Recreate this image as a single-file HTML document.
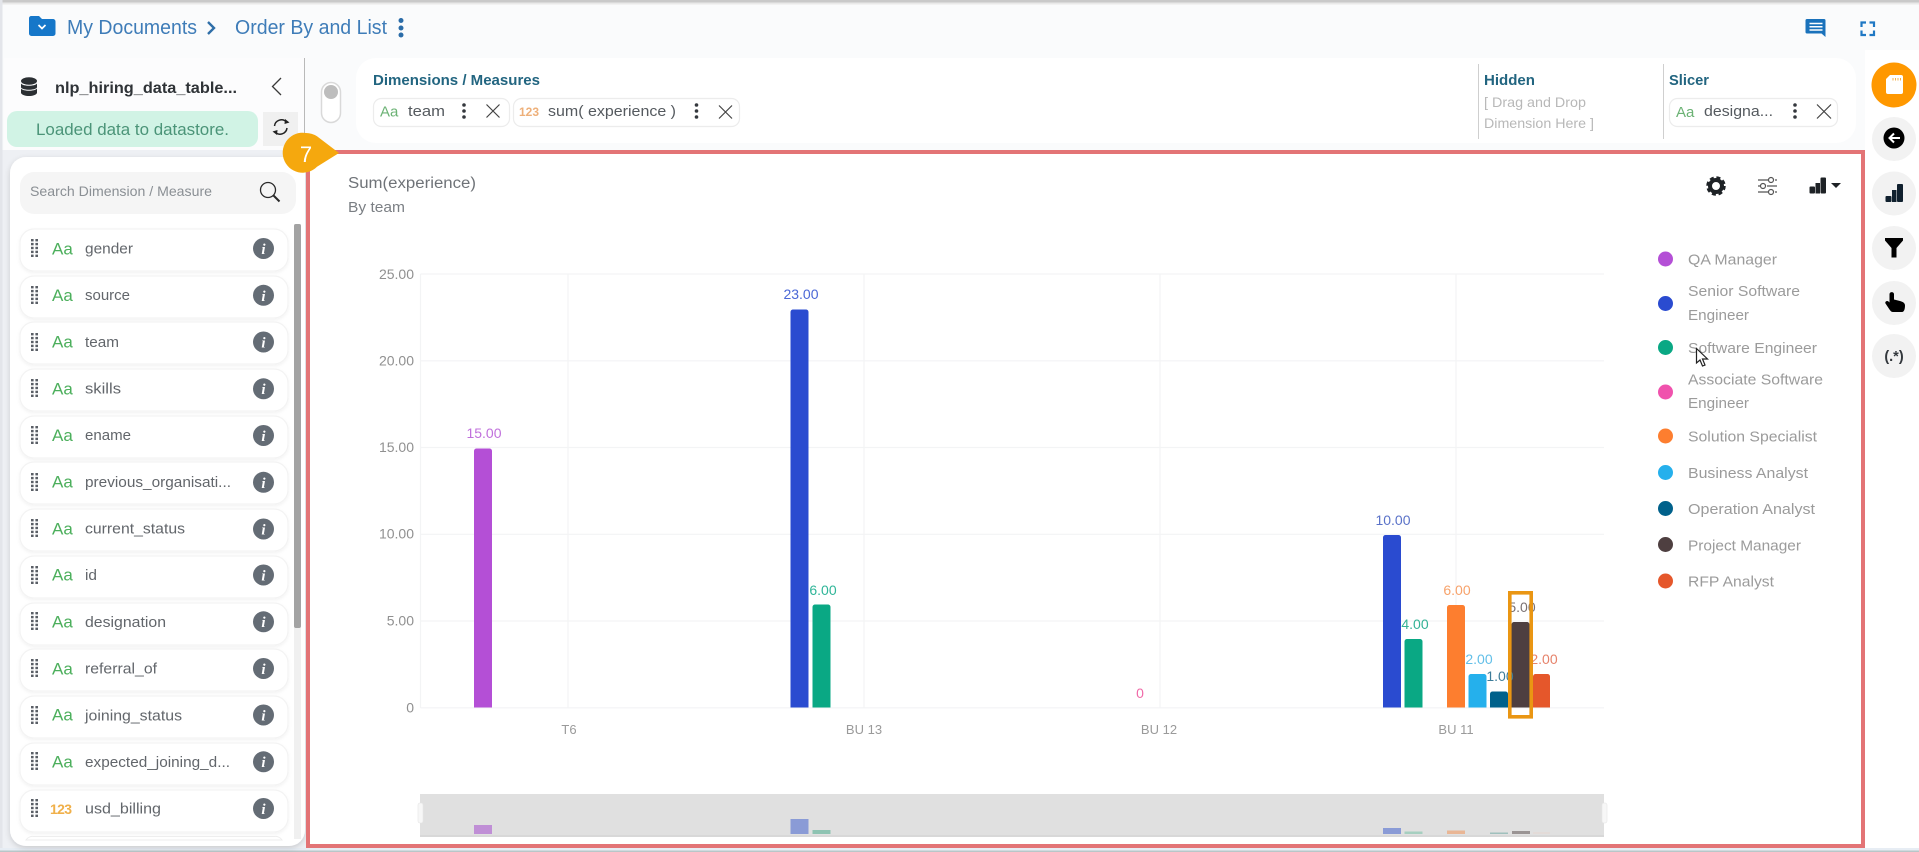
<!DOCTYPE html>
<html lang="en"><head><meta charset="utf-8"><title>Order By and List</title>
<style>
html,body{margin:0;padding:0;width:1919px;height:852px;overflow:hidden;background:#fafbfc}
svg{display:block;font-family:"Liberation Sans",sans-serif;filter:blur(.3px)}
.aa{font-size:17px;fill:#4caf5c}
.n{font-size:15px;fill:#62666b}
.i{font-size:15px;font-weight:bold;font-style:italic;fill:#fff;text-anchor:middle;font-family:"Liberation Serif",serif}
.y{font-size:14px;fill:#909090;text-anchor:end}
.x{font-size:13px;fill:#9a9a9a;text-anchor:middle}
.v{font-size:14px;text-anchor:middle}
.l{font-size:15px;fill:#9b9b9b}
.h{font-size:14.5px;font-weight:bold;fill:#226580}
.g{stroke:#f3f4f5;stroke-width:1.2}
.item{fill:#fff;stroke:#f3f3f3;stroke-width:1.2}
</style></head><body>
<svg width="1919" height="852" viewBox="0 0 1919 852" xmlns="http://www.w3.org/2000/svg">
<defs>
<g id="grip" fill="#5a5f66">
<rect x="0" y="0" width="7" height="2.4"/><rect x="0" y="3.9" width="7" height="2.4"/><rect x="0" y="7.8" width="7" height="2.4"/><rect x="0" y="11.7" width="7" height="2.4"/><rect x="0" y="15.6" width="7" height="2.4"/>
<rect x="2.6" y="0" width="1.8" height="18" fill="#fff"/>
</g>
<filter id="sh" x="-5%" y="-5%" width="110%" height="110%"><feDropShadow dx="0" dy="2" stdDeviation="3" flood-color="#000" flood-opacity=".16"/></filter>
<filter id="s2" x="-5%" y="-10%" width="110%" height="125%"><feDropShadow dx="0" dy="1.5" stdDeviation="1.5" flood-color="#000" flood-opacity=".05"/></filter>
</defs>

<!-- page background -->
<rect width="1919" height="852" fill="#fafbfc"/>
<rect x="0" y="0" width="1919" height="2.5" fill="#c9c9c9"/>
<rect x="0" y="2.5" width="1919" height="2" fill="#e9e9e9"/>
<rect x="0" y="0" width="2.5" height="852" fill="#e3e5ea"/>
<rect x="2.5" y="150" width="304" height="700" fill="#eef0f4"/>
<rect x="4" y="58" width="300" height="92" fill="#fcfcfd"/>
<rect x="1865" y="50" width="54" height="802" fill="#fff"/>
<rect x="0" y="848" width="1919" height="4" fill="#e7edf4"/>
<rect x="0" y="850.5" width="1919" height="1.5" fill="#b9c6c8"/>

<!-- header -->
<path d="M31 16h8l3 3h11a2.500 2.500 0 0 1 2.500 2.500v12a2.500 2.500 0 0 1-2.500 2.500H31.500a2.500 2.500 0 0 1-2.500-2.500V18.500A2.500 2.500 0 0 1 31 16z" fill="#1677c9"/>
<path d="M38.500 25l3.500 3.500 3.500-3.500" fill="none" stroke="#fff" stroke-width="1.700"/>
<text x="67" y="34" font-size="20" fill="#3e7cb8" textLength="130" lengthAdjust="spacingAndGlyphs">My Documents</text>
<path d="M208 22l6 6-6 6" fill="none" stroke="#2f6ea8" stroke-width="2.400"/>
<text x="235" y="34" font-size="20" fill="#3e7cb8" textLength="152" lengthAdjust="spacingAndGlyphs">Order By and List</text>
<g fill="#2b6ca8"><circle cx="401" cy="20.500" r="2.500"/><circle cx="401" cy="28" r="2.500"/><circle cx="401" cy="35" r="2.500"/></g>
<path d="M1807 19h17a1.500 1.500 0 0 1 1.500 1.500V37l-4-3.500h-14.500a1.500 1.500 0 0 1-1.500-1.500V20.500a1.500 1.500 0 0 1 1.500-1.500z" fill="#1a72bb"/>
<path d="M1809.500 23.500h13M1809.500 26.800h13M1809.500 30h13" stroke="#fff" stroke-width="1.500"/>
<path d="M1861.500 27v-4.500h4.500M1869.500 22.500h4.500V27M1874 30.500v4.500h-4.500M1866 35h-4.500v-4.500" fill="none" stroke="#1f78c4" stroke-width="2.200"/>

<!-- data source header -->
<g fill="#2b2f33"><ellipse cx="29" cy="81" rx="8" ry="3.800"/><path d="M21 83.500c2 3 14 3 16 0v4c-2 3-14 3-16 0zM21 88.500c2 3 14 3 16 0v4.500c-2 4-14 4-16 0z"/></g>
<text x="55" y="93" font-size="16" font-weight="bold" fill="#2f3337" textLength="182" lengthAdjust="spacingAndGlyphs">nlp_hiring_data_table...</text>
<path d="M281 78l-8.500 8.500 8.500 8.500" fill="none" stroke="#3a3a3a" stroke-width="1.300"/>
<rect x="7" y="111" width="251" height="36" rx="10" fill="#d1f3e5"/>
<text x="36" y="135" font-size="16.500" fill="#4b9478" textLength="193" lengthAdjust="spacingAndGlyphs">Loaded data to datastore.</text>
<rect x="263" y="112" width="35" height="34" fill="#f0f0f0"/>
<path d="M274.500 126a7 7 0 0 1 12-4M287 128a7 7 0 0 1-12 4" fill="none" stroke="#222" stroke-width="1.500"/>
<path d="M285 119l4.500 3.500-5 1.500zM277 135l-4.500-3.500 5-1.500z" fill="#222"/>
<rect x="304" y="58" width="1" height="92" fill="#b9b9b9"/>

<!-- field panel -->
<rect x="10" y="157" width="295" height="689" rx="16" fill="#fff" filter="url(#sh)"/>
<rect x="20" y="172" width="276" height="42" rx="14" fill="#f5f5f5"/>
<text x="30" y="196" font-size="14" fill="#8a8f94" textLength="182" lengthAdjust="spacingAndGlyphs">Search Dimension / Measure</text>
<circle cx="268" cy="190" r="7.500" fill="none" stroke="#2a2a2a" stroke-width="1.300"/>
<path d="M273.500 195.500l6 6" stroke="#2a2a2a" stroke-width="2"/>
<rect x="294" y="224" width="7" height="615" fill="#f0f0f0"/>
<rect x="294" y="224" width="7" height="404" rx="2" fill="#a3a3a3"/>

<g filter="url(#s2)">
<rect class="item" x="20" y="229" width="268" height="42" rx="14"/><rect class="item" x="20" y="276" width="268" height="42" rx="14"/><rect class="item" x="20" y="322" width="268" height="42" rx="14"/><rect class="item" x="20" y="369" width="268" height="42" rx="14"/><rect class="item" x="20" y="416" width="268" height="42" rx="14"/><rect class="item" x="20" y="462" width="268" height="42" rx="14"/><rect class="item" x="20" y="509" width="268" height="42" rx="14"/><rect class="item" x="20" y="556" width="268" height="42" rx="14"/><rect class="item" x="20" y="603" width="268" height="42" rx="14"/><rect class="item" x="20" y="649" width="268" height="42" rx="14"/><rect class="item" x="20" y="696" width="268" height="42" rx="14"/><rect class="item" x="20" y="743" width="268" height="42" rx="14"/><rect class="item" x="20" y="790" width="268" height="42" rx="14"/>
</g>
<path d="M26 840a8 8 0 0 1 8-3.500h240a8 8 0 0 1 8 3.500z" fill="#fff" stroke="#eee"/>

<g fill="#646c75">
<circle cx="263.500" cy="248.500" r="10.500"/><circle cx="263.500" cy="295.300" r="10.500"/><circle cx="263.500" cy="342" r="10.500"/><circle cx="263.500" cy="388.800" r="10.500"/><circle cx="263.500" cy="435.500" r="10.500"/><circle cx="263.500" cy="482.300" r="10.500"/><circle cx="263.500" cy="529" r="10.500"/><circle cx="263.500" cy="575" r="10.500"/><circle cx="263.500" cy="621.800" r="10.500"/><circle cx="263.500" cy="668.500" r="10.500"/><circle cx="263.500" cy="715" r="10.500"/><circle cx="263.500" cy="761.800" r="10.500"/><circle cx="263.500" cy="808.500" r="10.500"/>
</g>
<text class="i" x="263.500" y="254">i</text><text class="i" x="263.500" y="301">i</text><text class="i" x="263.500" y="347.500">i</text><text class="i" x="263.500" y="394">i</text><text class="i" x="263.500" y="441">i</text><text class="i" x="263.500" y="488">i</text><text class="i" x="263.500" y="534.500">i</text><text class="i" x="263.500" y="580.500">i</text><text class="i" x="263.500" y="627">i</text><text class="i" x="263.500" y="674">i</text><text class="i" x="263.500" y="720.500">i</text><text class="i" x="263.500" y="767">i</text><text class="i" x="263.500" y="814">i</text>

<use href="#grip" x="31" y="239"/><use href="#grip" x="31" y="286"/><use href="#grip" x="31" y="333"/><use href="#grip" x="31" y="379"/><use href="#grip" x="31" y="426"/><use href="#grip" x="31" y="473"/><use href="#grip" x="31" y="519"/><use href="#grip" x="31" y="566"/><use href="#grip" x="31" y="612"/><use href="#grip" x="31" y="659"/><use href="#grip" x="31" y="706"/><use href="#grip" x="31" y="752"/><use href="#grip" x="31" y="799"/>

<text class="aa" x="52" y="254.500">Aa</text><text class="n" x="85" y="253.500" textLength="48" lengthAdjust="spacingAndGlyphs">gender</text>
<text class="aa" x="52" y="301">Aa</text><text class="n" x="85" y="300" textLength="45" lengthAdjust="spacingAndGlyphs">source</text>
<text class="aa" x="52" y="347.500">Aa</text><text class="n" x="85" y="347" textLength="34" lengthAdjust="spacingAndGlyphs">team</text>
<text class="aa" x="52" y="394.500">Aa</text><text class="n" x="85" y="393.500" textLength="36" lengthAdjust="spacingAndGlyphs">skills</text>
<text class="aa" x="52" y="441">Aa</text><text class="n" x="85" y="440" textLength="46" lengthAdjust="spacingAndGlyphs">ename</text>
<text class="aa" x="52" y="487.500">Aa</text><text class="n" x="85" y="487" textLength="146" lengthAdjust="spacingAndGlyphs">previous_organisati...</text>
<text class="aa" x="52" y="534.500">Aa</text><text class="n" x="85" y="533.500" textLength="100" lengthAdjust="spacingAndGlyphs">current_status</text>
<text class="aa" x="52" y="580.500">Aa</text><text class="n" x="85" y="580" textLength="12" lengthAdjust="spacingAndGlyphs">id</text>
<text class="aa" x="52" y="627.500">Aa</text><text class="n" x="85" y="627" textLength="81" lengthAdjust="spacingAndGlyphs">designation</text>
<text class="aa" x="52" y="674.500">Aa</text><text class="n" x="85" y="673.500" textLength="72" lengthAdjust="spacingAndGlyphs">referral_of</text>
<text class="aa" x="52" y="720.500">Aa</text><text class="n" x="85" y="720.500" textLength="97" lengthAdjust="spacingAndGlyphs">joining_status</text>
<text class="aa" x="52" y="767.500">Aa</text><text class="n" x="85" y="767" textLength="145" lengthAdjust="spacingAndGlyphs">expected_joining_d...</text>
<text x="50" y="814" font-size="14" font-weight="bold" fill="#f0b04a" textLength="22">123</text><text class="n" x="85" y="813.500" textLength="76" lengthAdjust="spacingAndGlyphs">usd_billing</text>

<!-- toolbar -->
<rect x="321.500" y="82.500" width="19" height="40" rx="9.500" fill="#fff" stroke="#d9d9d9" stroke-width="1.500"/>
<circle cx="331" cy="92" r="7" fill="#bdbdbd"/>
<rect x="356" y="58" width="1500" height="85" rx="20" fill="#fff"/>
<text class="h" x="373" y="85" textLength="167" lengthAdjust="spacingAndGlyphs">Dimensions / Measures</text>
<rect x="373.500" y="98.500" width="136" height="28" rx="8" fill="#fff" stroke="#ececec" stroke-width="1.200"/>
<text x="380" y="116.500" font-size="15" fill="#6bb274">Aa</text>
<text x="408" y="116" font-size="15" fill="#555a5f" textLength="37" lengthAdjust="spacingAndGlyphs">team</text>
<g fill="#34383d"><circle cx="464" cy="105" r="1.800"/><circle cx="464" cy="111" r="1.800"/><circle cx="464" cy="117" r="1.800"/></g>
<path d="M486.500 104.500l13 13M499.500 104.500l-13 13" stroke="#444" stroke-width="1.200"/>

<rect x="513.500" y="98.500" width="226" height="28" rx="8" fill="#fff" stroke="#ececec" stroke-width="1.200"/>
<text x="519" y="116" font-size="12" font-weight="bold" fill="#eeb07a" textLength="20">123</text>
<text x="548" y="116" font-size="15" fill="#555a5f" textLength="128" lengthAdjust="spacingAndGlyphs">sum( experience )</text>
<g fill="#34383d"><circle cx="696.500" cy="105" r="1.800"/><circle cx="696.500" cy="111" r="1.800"/><circle cx="696.500" cy="117" r="1.800"/></g>
<path d="M719 105.500l13 13M732 105.500l-13 13" stroke="#444" stroke-width="1.200"/>

<rect x="1478" y="64" width="1" height="75" fill="#cfcfcf"/>
<text class="h" x="1484" y="85" textLength="51" lengthAdjust="spacingAndGlyphs">Hidden</text>
<text x="1484" y="107" font-size="14" fill="#b8b8b8" textLength="102" lengthAdjust="spacingAndGlyphs">[ Drag and Drop</text>
<text x="1484" y="128" font-size="14" fill="#b8b8b8" textLength="110" lengthAdjust="spacingAndGlyphs">Dimension Here ]</text>
<rect x="1663" y="64" width="1" height="75" fill="#cfcfcf"/>
<text class="h" x="1669" y="85" textLength="40" lengthAdjust="spacingAndGlyphs">Slicer</text>
<rect x="1669.500" y="98.500" width="168" height="28" rx="8" fill="#fff" stroke="#ececec" stroke-width="1.200"/>
<text x="1676" y="117" font-size="15" fill="#6bb274">Aa</text>
<text x="1704" y="116" font-size="15" fill="#555a5f" textLength="69" lengthAdjust="spacingAndGlyphs">designa...</text>
<g fill="#34383d"><circle cx="1795" cy="105" r="1.800"/><circle cx="1795" cy="111" r="1.800"/><circle cx="1795" cy="117" r="1.800"/></g>
<path d="M1817 104.500l14 14M1831 104.500l-14 14" stroke="#444" stroke-width="1.200"/>

<!-- chart frame -->
<rect x="308" y="152" width="1555" height="694" fill="#fff" stroke="#e37476" stroke-width="4"/>

<text x="348" y="188" font-size="15.500" fill="#6f7378" textLength="128" lengthAdjust="spacingAndGlyphs">Sum(experience)</text>
<text x="348" y="212" font-size="15" fill="#7b7f84" textLength="57" lengthAdjust="spacingAndGlyphs">By team</text>

<!-- chart tools -->
<circle cx="1716" cy="186" r="6" fill="none" stroke="#1e2226" stroke-width="4"/>
<circle cx="1716" cy="186" r="8.500" fill="none" stroke="#1e2226" stroke-width="2.500" stroke-dasharray="4 2.700"/>
<g fill="none" stroke="#555" stroke-width="1.200">
<path d="M1758 180h10M1775 180h2M1758 186h2M1767 186h10M1758 192h10M1775 192h2"/>
<circle cx="1771" cy="180" r="2.500"/><circle cx="1763" cy="186" r="2.500"/><circle cx="1771" cy="192" r="2.500"/>
</g>
<g fill="#1e2226"><rect x="1809.500" y="186.500" width="5.500" height="7" rx="1"/><rect x="1815.500" y="183" width="4.500" height="10.500"/><rect x="1820.500" y="177.500" width="5.500" height="16" rx="1"/><path d="M1831 183h10l-5 5z"/></g>

<!-- grid -->
<g class="g">
<path d="M420.500 274H1604M420.500 360.800H1604M420.500 447.500H1604M420.500 534.300H1604M420.500 621H1604M420.500 707.800H1604"/>
<path d="M420.500 274V708M568 274V708M864 274V708M1160 274V708M1456 274V708"/>
</g>
<text class="y" x="414" y="279">25.00</text><text class="y" x="414" y="365.500">20.00</text><text class="y" x="414" y="452">15.00</text><text class="y" x="414" y="538.500">10.00</text><text class="y" x="414" y="625.500">5.00</text><text class="y" x="414" y="712.500">0</text>
<text class="x" x="569" y="734">T6</text><text class="x" x="864" y="734">BU 13</text><text class="x" x="1159" y="734">BU 12</text><text class="x" x="1456" y="734">BU 11</text>

<!-- bars -->
<path d="M474 707.500V451a2.500 2.500 0 0 1 2.500-2.500h13a2.500 2.500 0 0 1 2.500 2.500v256.500z" fill="#b44fd6"/>
<path d="M790.500 707.500V312a2.500 2.500 0 0 1 2.500-2.500h13a2.500 2.500 0 0 1 2.500 2.500v395.500z" fill="#2a4bd0"/>
<path d="M812.500 707.500V607a2.500 2.500 0 0 1 2.500-2.500h13a2.500 2.500 0 0 1 2.500 2.500v100.500z" fill="#0aa884"/>
<path d="M1383 707.500V537.500a2.500 2.500 0 0 1 2.500-2.500h13a2.500 2.500 0 0 1 2.500 2.500v170z" fill="#2a4bd0"/>
<path d="M1404.500 707.500V641.500a2.500 2.500 0 0 1 2.500-2.500h13a2.500 2.500 0 0 1 2.500 2.500v66z" fill="#0aa884"/>
<path d="M1447 707.500V607.500a2.500 2.500 0 0 1 2.500-2.500h13a2.500 2.500 0 0 1 2.500 2.500v100z" fill="#fd7e2f"/>
<path d="M1468.500 707.500V676.500a2.500 2.500 0 0 1 2.500-2.500h13a2.500 2.500 0 0 1 2.500 2.500v31z" fill="#25b0ec"/>
<path d="M1490 707.500V694a2.500 2.500 0 0 1 2.500-2.500h13a2.500 2.500 0 0 1 2.500 2.500v13.500z" fill="#00618b"/>
<path d="M1511.500 707.500V624.500a2.500 2.500 0 0 1 2.500-2.500h13a2.500 2.500 0 0 1 2.500 2.500v83z" fill="#4e3f40"/>
<path d="M1533 707.500V676.500a2.500 2.500 0 0 1 2.500-2.500h12a2.500 2.500 0 0 1 2.500 2.500v31z" fill="#e5572b"/>

<!-- bar labels -->
<text class="v" x="484" y="438" fill="#c070dc">15.00</text>
<text class="v" x="801" y="299" fill="#4a67d6">23.00</text>
<text class="v" x="823" y="595" fill="#2fb598">6.00</text>
<text class="v" x="1140" y="698" fill="#f06aa8">0</text>
<text class="v" x="1393" y="525" fill="#5a72c8">10.00</text>
<text class="v" x="1415" y="629" fill="#33b295">4.00</text>
<text class="v" x="1457" y="595" fill="#f7a26b">6.00</text>
<text class="v" x="1479" y="664" fill="#62bfe8">2.00</text>
<text class="v" x="1500" y="681" fill="#3d7c99">1.00</text>
<text class="v" x="1522" y="612" fill="#7a7071">5.00</text>
<text class="v" x="1544" y="664" fill="#e6826a">2.00</text>
<rect x="1509.800" y="592.800" width="21.400" height="124" fill="none" stroke="#ea9613" stroke-width="3.600"/>

<!-- legend -->
<circle cx="1665.500" cy="259" r="7.500" fill="#b44fd6"/><text class="l" x="1688" y="264.500" textLength="89" lengthAdjust="spacingAndGlyphs">QA Manager</text>
<circle cx="1665.500" cy="303.500" r="7.500" fill="#2a4bd0"/><text class="l" x="1688" y="296" textLength="112" lengthAdjust="spacingAndGlyphs">Senior Software</text><text class="l" x="1688" y="320" textLength="61" lengthAdjust="spacingAndGlyphs">Engineer</text>
<circle cx="1665.500" cy="347.500" r="7.500" fill="#0aa884"/><text class="l" x="1688" y="353" textLength="129" lengthAdjust="spacingAndGlyphs">Software Engineer</text>
<circle cx="1665.500" cy="392" r="7.500" fill="#f052ad"/><text class="l" x="1688" y="384.500" textLength="135" lengthAdjust="spacingAndGlyphs">Associate Software</text><text class="l" x="1688" y="408" textLength="61" lengthAdjust="spacingAndGlyphs">Engineer</text>
<circle cx="1665.500" cy="436" r="7.500" fill="#fd7e2f"/><text class="l" x="1688" y="441.500" textLength="129" lengthAdjust="spacingAndGlyphs">Solution Specialist</text>
<circle cx="1665.500" cy="472.500" r="7.500" fill="#25b0ec"/><text class="l" x="1688" y="478" textLength="120" lengthAdjust="spacingAndGlyphs">Business Analyst</text>
<circle cx="1665.500" cy="508.500" r="7.500" fill="#00618b"/><text class="l" x="1688" y="514" textLength="127" lengthAdjust="spacingAndGlyphs">Operation Analyst</text>
<circle cx="1665.500" cy="544.500" r="7.500" fill="#4e3f40"/><text class="l" x="1688" y="550.500" textLength="113" lengthAdjust="spacingAndGlyphs">Project Manager</text>
<circle cx="1665.500" cy="581" r="7.500" fill="#e5572b"/><text class="l" x="1688" y="586.500" textLength="86" lengthAdjust="spacingAndGlyphs">RFP Analyst</text>
<path d="M1696.500 348.500v14.500l3.500-3 2.500 6 2.500-1-2.500-6h5z" fill="#fff" stroke="#222" stroke-width="1.200"/>

<!-- minimap -->
<rect x="420" y="794" width="1184" height="43" fill="#e0e0e0"/>
<rect x="420" y="835" width="1184" height="2" fill="#d8d8d8"/>
<rect x="418" y="803" width="5" height="20" rx="2" fill="#f7f7f7" stroke="#e4e4e4" stroke-width=".6"/>
<rect x="1602" y="803" width="5" height="20" rx="2" fill="#f7f7f7" stroke="#e4e4e4" stroke-width=".6"/>
<rect x="474" y="825" width="18" height="9" fill="#c08fd6"/>
<rect x="790.500" y="819" width="18" height="15" fill="#8a9bd6"/>
<rect x="812.500" y="830" width="18" height="4" fill="#8ec3b2"/>
<rect x="1383" y="828" width="18" height="6" fill="#8a9bd6"/>
<rect x="1404.500" y="831.500" width="18" height="2.500" fill="#a6cfc0"/>
<rect x="1447" y="830.500" width="18" height="3.500" fill="#e9b695"/>
<rect x="1490" y="832.500" width="18" height="1.500" fill="#9fc0bd"/>
<rect x="1512" y="831" width="18" height="3" fill="#9a9494"/>
<rect x="1533" y="832" width="17" height="2" fill="#e3dbd8"/>

<!-- step marker -->
<path d="M306 133a20 20 0 0 1 11 3.300L339 153l-22 13.700a20 20 0 1 1-11-33.700z" fill="#f5a80e"/>
<text x="306" y="162" font-size="22" fill="#fff" text-anchor="middle">7</text>

<!-- right rail -->
<circle cx="1894" cy="85" r="22.500" fill="#ff9800"/>
<path d="M1890 75h11a2 2 0 0 1 2 2v15a2 2 0 0 1-2 2h-13a2 2 0 0 1-2-2V79z" fill="#fff"/>
<path d="M1893 78v2.500M1895.500 78v2.500M1898 78v2.500M1900.500 78v2.500" stroke="#f3b04d" stroke-width="1"/>
<circle cx="1894" cy="139" r="22" fill="#f2f2f2"/><circle cx="1894" cy="138" r="10.500" fill="#000"/>
<path d="M1900 138h-10M1894 133.500l-4.500 4.500 4.500 4.500" fill="none" stroke="#fff" stroke-width="2"/>
<circle cx="1894" cy="193.500" r="22" fill="#f2f2f2"/>
<g fill="#10202e"><rect x="1885.500" y="196" width="6" height="6" rx="1"/><rect x="1892" y="190" width="4.500" height="12"/><rect x="1897" y="184" width="6" height="18" rx="1"/></g>
<circle cx="1894" cy="248" r="22" fill="#f2f2f2"/>
<path d="M1885 238h18v2.500l-6.500 7.500v9.500h-5V248l-6.500-7.500z" fill="#000"/>
<circle cx="1894" cy="303" r="22" fill="#f2f2f2"/>
<path d="M1889.500 294a2.300 2.300 0 0 1 4.500 0v5.500l6 1.500c3 .8 5 2 5 4.500 0 3.500-1 6.500-3 6.500h-9c-1.500 0-2.500-1-3.500-2.500l-4-6c-1-1.700 1.500-3.500 3-2l1 1z" fill="#000"/>
<circle cx="1894" cy="356" r="22" fill="#f2f2f2"/>
<text x="1894" y="361" font-size="14.500" font-weight="bold" fill="#33383d" text-anchor="middle">(.*)</text>
</svg>
</body></html>
